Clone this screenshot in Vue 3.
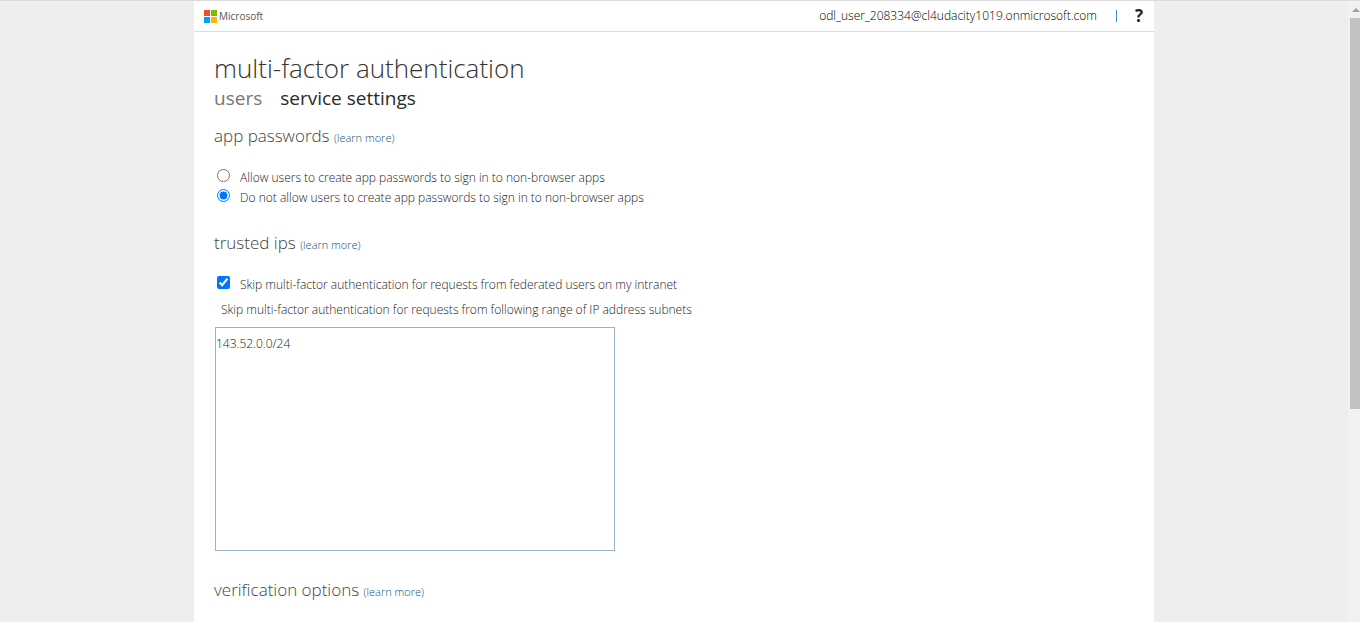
<script setup>
import { ref } from 'vue'

const appPasswords = ref('deny')
const skipFederated = ref(true)
const subnets = ref('143.52.0.0/24')
</script>

<template>
  <div class="shell">
    <div class="viewport">
      <div class="page">
        <header class="topbar">
          <a class="brand" href="#" aria-label="Microsoft">
            <svg class="logo" viewBox="0 0 13 13" aria-hidden="true">
              <rect width="6" height="6" fill="#f1511b" />
              <rect x="7" width="6" height="6" fill="#80b900" />
              <rect y="7" width="6" height="6" fill="#00a4ef" />
              <rect x="7" y="7" width="6" height="6" fill="#fbb900" />
            </svg>
            <span>Microsoft</span>
          </a>
          <div class="account">
            <span>odl_user_208334@cl4udacity1019.onmicrosoft.com</span>
            <span class="divider"></span>
            <button class="help" type="button">?</button>
          </div>
        </header>

        <main class="content">
          <h1>multi-factor authentication</h1>
          <nav class="tabs">
            <a href="#">users</a>
            <a class="current" href="#" aria-current="page">service settings</a>
          </nav>

          <section>
            <h2>app passwords <a href="#">(learn more)</a></h2>
            <div class="options">
              <label class="choice">
                <input v-model="appPasswords" type="radio" name="app-passwords" value="allow" />
                <span>Allow users to create app passwords to sign in to non-browser apps</span>
              </label>
              <label class="choice">
                <input v-model="appPasswords" type="radio" name="app-passwords" value="deny" />
                <span>Do not allow users to create app passwords to sign in to non-browser apps</span>
              </label>
            </div>
          </section>

          <section>
            <h2>trusted ips <a href="#">(learn more)</a></h2>
            <div class="options">
              <label class="choice">
                <input v-model="skipFederated" type="checkbox" />
                <span>Skip multi-factor authentication for requests from federated users on my intranet</span>
              </label>
            </div>
            <label class="caption" for="subnets">Skip multi-factor authentication for requests from following range of IP address subnets</label>
            <textarea id="subnets" v-model="subnets" spellcheck="false"></textarea>
          </section>

          <section>
            <h2>verification options <a href="#">(learn more)</a></h2>
          </section>
        </main>
      </div>
    </div>
    <div class="scrollbar" aria-hidden="true">
      <svg viewBox="0 0 8 4"><path d="M4 0 8 4H0Z" fill="#a0a0a0" /></svg>
      <div class="thumb"></div>
    </div>
  </div>
</template>

<style>
body {
  background: #eee;
}
</style>

<style scoped>
.shell {
  display: flex;
  height: 100vh;
  box-sizing: border-box;
  border-top: 1px solid #dcdcdc;
  overflow: hidden;
  background: #eee;
  color: #1a1a1a;
  font: 300 12px/20px "Open Sans", "Noto Sans", sans-serif;
}

.viewport {
  flex: 1;
  overflow: hidden;
}

.page {
  max-width: 960px;
  min-height: 100%;
  margin: 0 auto;
  background: #fff;
}

.topbar {
  display: flex;
  align-items: center;
  justify-content: space-between;
  height: 30px;
  padding: 0 10px;
  border-bottom: 1px solid #dcdcdc;
}

.brand {
  display: flex;
  align-items: center;
  gap: 2px;
  color: #555;
  font-size: 10px;
  font-weight: 400;
  line-height: 16px;
  text-decoration: none;
}

.logo {
  width: 13px;
  height: 13px;
}

.account {
  display: flex;
  align-items: center;
  color: #000;
}

.divider {
  width: 1px;
  height: 12px;
  margin: 0 18px 0 19px;
  background: #3f94c8;
}

.help {
  padding: 0 1px 0 0;
  border: 0;
  background: none;
  color: #222;
  font: 700 17px/20px "Open Sans", sans-serif;
}

.content {
  padding: 19px 20px;
}

h1,
h2 {
  margin: 0;
  font-weight: 300;
}

h1 {
  color: #333;
  font-size: 26px;
  line-height: 34px;
}

.tabs {
  display: flex;
  gap: 18px;
  font-size: 19px;
  font-weight: 400;
  line-height: 26px;
}

.tabs a {
  color: #777;
  text-decoration: none;
}

.tabs .current {
  color: #2a2a2a;
}

section {
  margin-bottom: 23px;
}

.tabs + section {
  margin-top: 13px;
}

h2 {
  color: #444;
  font-size: 17px;
  line-height: 24px;
}

h2 a {
  color: #0f527c;
  font-size: 11px;
  text-decoration: none;
}

.options {
  padding: 18px 0 0 3px;
}

.choice {
  display: flex;
  gap: 10px;
  height: 20px;
}

.choice input {
  flex: none;
  width: 13px;
  height: 13px;
  margin: 1px 0 0;
  accent-color: #0075ff;
}

.caption {
  display: block;
  margin: 5px 0 7px 7px;
}

textarea {
  display: block;
  box-sizing: border-box;
  width: 400px;
  max-width: 100%;
  height: 224px;
  margin: 0 0 27px 1px;
  padding: 6px 0;
  border: 1px solid #9ab3c5;
  outline: 0;
  resize: none;
  background: #fff;
  color: #1a1a1a;
  font: inherit;
}

.scrollbar {
  width: 12px;
  background: #f1f1f1;
}

.scrollbar svg {
  display: block;
  width: 8px;
  height: 4px;
  margin: 7px 0 6px 4px;
}

.thumb {
  height: 63%;
  margin-left: 2px;
  background: #c1c1c1;
}
</style>
